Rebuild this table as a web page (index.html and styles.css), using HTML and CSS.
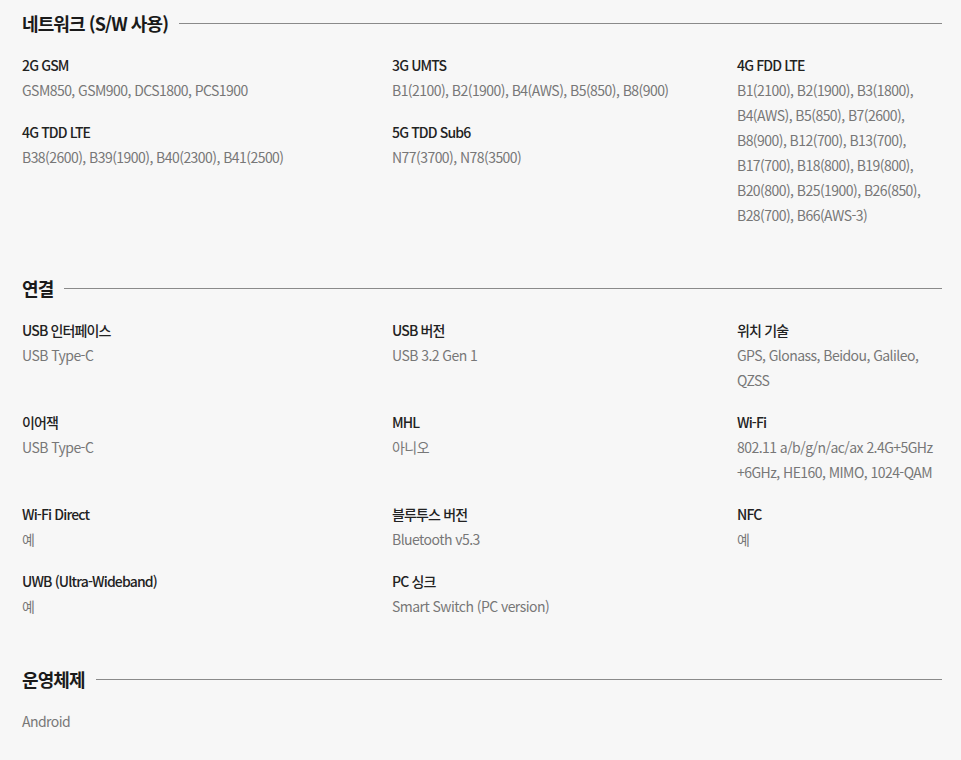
FILE: index.html
```html
<!DOCTYPE html>
<html lang="ko">
<head>
<meta charset="utf-8">
<title>사양</title>
<link rel="stylesheet" href="styles.css">
</head>
<body>
<div class="page">
  <section class="spec">
    <h2 class="spec-title">네트워크 (S/W 사용)</h2>
    <div class="cols">
      <div class="col">
        <div class="item"><div class="label">2G GSM</div><div class="value">GSM850, GSM900, DCS1800, PCS1900</div></div>
        <div class="item"><div class="label">4G TDD LTE</div><div class="value">B38(2600), B39(1900), B40(2300), B41(2500)</div></div>
      </div>
      <div class="col">
        <div class="item"><div class="label">3G UMTS</div><div class="value">B1(2100), B2(1900), B4(AWS), B5(850), B8(900)</div></div>
        <div class="item"><div class="label">5G TDD Sub6</div><div class="value">N77(3700), N78(3500)</div></div>
      </div>
      <div class="col">
        <div class="item"><div class="label">4G FDD LTE</div><div class="value">B1(2100), B2(1900), B3(1800),<br>B4(AWS), B5(850), B7(2600),<br>B8(900), B12(700), B13(700),<br>B17(700), B18(800), B19(800),<br>B20(800), B25(1900), B26(850),<br>B28(700), B66(AWS-3)</div></div>
      </div>
    </div>
  </section>

  <section class="spec">
    <h2 class="spec-title">연결</h2>
    <div class="grid">
      <div class="item"><div class="label">USB 인터페이스</div><div class="value">USB Type-C</div></div>
      <div class="item"><div class="label">USB 버전</div><div class="value">USB 3.2 Gen 1</div></div>
      <div class="item"><div class="label">위치 기술</div><div class="value">GPS, Glonass, Beidou, Galileo,<br>QZSS</div></div>
      <div class="item"><div class="label">이어잭</div><div class="value">USB Type-C</div></div>
      <div class="item"><div class="label">MHL</div><div class="value">아니오</div></div>
      <div class="item"><div class="label">Wi-Fi</div><div class="value">802.11 a/b/g/n/ac/ax 2.4G+5GHz<br>+6GHz, HE160, MIMO, 1024-QAM</div></div>
      <div class="item"><div class="label">Wi-Fi Direct</div><div class="value">예</div></div>
      <div class="item"><div class="label">블루투스 버전</div><div class="value">Bluetooth v5.3</div></div>
      <div class="item"><div class="label">NFC</div><div class="value">예</div></div>
      <div class="item"><div class="label">UWB (Ultra-Wideband)</div><div class="value">예</div></div>
      <div class="item"><div class="label">PC 싱크</div><div class="value">Smart Switch (PC version)</div></div>
    </div>
  </section>

  <section class="spec">
    <h2 class="spec-title">운영체제</h2>
    <div class="grid">
      <div class="item"><div class="value">Android</div></div>
    </div>
  </section>
</div>
</body>
</html>
```
FILE: styles.css
```css
html, body {
  margin: 0;
  padding: 0;
  background: #f7f7f7;
}
body {
  font-family: "Noto Sans CJK KR", "Noto Sans", sans-serif;
  color: #222;
}
.page {
  padding: 0 19px 0 22px;
}
.spec {
  padding-bottom: 37px;
}
.spec-title {
  display: flex;
  align-items: center;
  margin: 0;
  height: 46px;
  font-size: 18px;
  font-weight: 700;
  color: #1a1a1a;
  letter-spacing: -0.9px;
  white-space: nowrap;
}
.spec-title::after {
  content: "";
  flex: 1;
  height: 1px;
  background: #8a8a8a;
  margin-left: 11px;
}
.cols, .grid {
  display: grid;
  grid-template-columns: 370px 345px 1fr;
  padding-top: 7px;
}
.grid {
  row-gap: 17px;
}
.col {
  display: flex;
  flex-direction: column;
  gap: 17px;
}
.label {
  font-size: 14px;
  line-height: 25px;
  font-weight: 500;
  color: #222;
  letter-spacing: -0.85px;
  white-space: nowrap;
}
.value {
  font-size: 14px;
  line-height: 25px;
  color: #777;
  letter-spacing: -0.55px;
  white-space: nowrap;
}
```
